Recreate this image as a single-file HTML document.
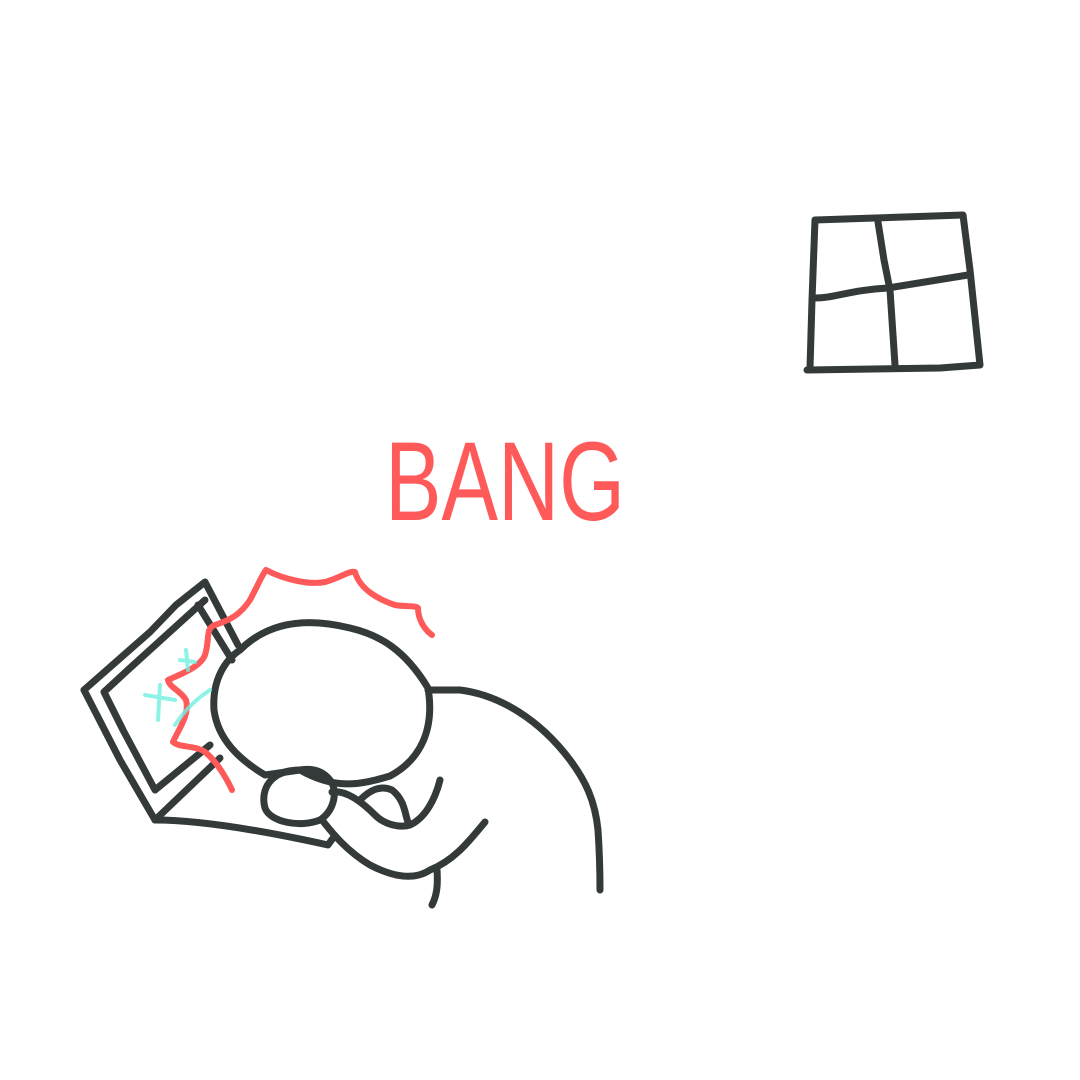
<!DOCTYPE html>
<html><head><meta charset="utf-8"><style>
html,body{margin:0;padding:0;background:#fff;width:1080px;height:1080px;overflow:hidden}
</style></head><body>
<svg width="1080" height="1080" viewBox="0 0 1080 1080" xmlns="http://www.w3.org/2000/svg">
<g fill="none" stroke="#343a3a" stroke-width="7" stroke-linecap="round" stroke-linejoin="round">
<path d="M815 220 L963 215 L970 270 L980 365 L940 368 L807 370"/>
<path d="M815 220 L812 300 L810 368"/>
<path d="M878 222 L884 260 L890 290 L895 365"/>
<path d="M815 298 C835 298 850 290 888 288 L968 275"/>
<path d="M240 650 C270 620 310 618 350 628 C380 635 405 650 428 688 C435 730 420 760 390 776 C360 785 335 790 300 770 L265 775 C240 760 218 740 214 710 C212 680 225 660 240 650 Z"/>
<path d="M300 770 C270 770 260 790 265 808 C270 822 300 828 320 820 C335 810 338 790 330 780 C322 770 312 768 300 770"/>
<path d="M332 792 C345 790 360 800 375 815 C385 825 400 828 410 825 C425 818 435 800 440 780"/>
<path d="M360 800 C370 790 380 785 392 790 C405 800 405 815 408 822"/>
<path d="M428 690 L460 690 C500 695 540 720 570 760 C585 780 595 800 598 830 C600 860 600 875 600 890"/>
<path d="M322 820 C330 830 345 850 370 865 C395 878 415 880 430 870 C455 860 470 840 485 822"/>
<path d="M437 870 C438 885 437 895 432 905"/>
<path d="M84 690 L150 632 L176 605 L205 582 L238 645"/>
<path d="M205 600 L130 668 L104 692 L123 730 L155 790 L210 745"/>
<path d="M84 690 L120 760 L155 820 L220 758"/>
<path d="M155 820 C200 820 260 830 328 845 L333 838"/>
<path d="M198 605 L232 660"/>
</g>
<g fill="none" stroke="#ff5a5a" stroke-width="6" stroke-linecap="round" stroke-linejoin="round">
<path d="M232 790 C225 775 215 760 205 752 C195 745 180 748 173 742 C178 730 190 715 186 700 C180 690 170 688 168 680 C178 675 200 668 205 655 C210 640 205 628 215 625 C230 620 240 615 250 600 C258 585 262 575 266 570 C285 580 310 585 325 582 C340 578 350 570 355 572 C360 590 380 600 395 605 C405 607 415 605 418 608 C418 620 425 630 432 635"/>
</g>
<g fill="none" stroke="#6ff0e0" stroke-width="4" stroke-linecap="round" opacity="0.8">
<path d="M145 695 L175 700 M160 685 L158 720 M180 660 L195 662 M186 650 L188 670 M175 725 C185 710 195 700 210 690"/>
</g>
<text x="385" y="520" font-family="Liberation Sans, sans-serif" font-size="112" fill="#ff5a5a" textLength="240" lengthAdjust="spacingAndGlyphs">BANG</text>
</svg>
</body></html>
